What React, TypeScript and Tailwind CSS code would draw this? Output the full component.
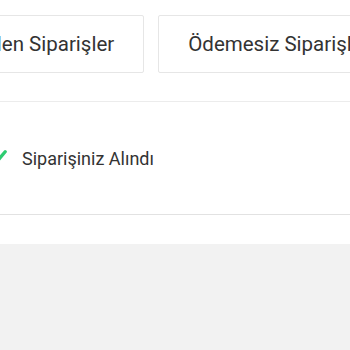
export default function App() {
  return (
    <div className="w-[350px] h-[350px] overflow-hidden bg-[#f2f2f2] font-['Roboto',sans-serif]">
      <div className="bg-white h-[244px] overflow-hidden">
        <div className="flex gap-[14px] pt-[15px] ml-[-58px] whitespace-nowrap">
          <button className="h-[58px] px-[29px] shrink-0 border border-[#e6e6e6] rounded-[2px] bg-white text-[20.5px] text-[#333]">
            Gelen Siparişler
          </button>
          <button className="h-[58px] px-[29px] shrink-0 border border-[#e6e6e6] rounded-[2px] bg-white text-[20.5px] text-[#333]">
            Ödemesiz Siparişler
          </button>
        </div>

        <div className="mt-[28px] border-t border-[#ececec]">
          <div className="h-[113px] flex items-center gap-[13px] ml-[-14px] border-b border-[#e2e2e2]">
            <svg width="23" height="23" viewBox="0 0 24 24" fill="none" stroke="#2ecc71" strokeWidth="3.5" strokeLinecap="round" strokeLinejoin="round">
              <path d="M4 13l5 5L20 5" />
            </svg>
            <span className="text-[18px] text-[#333]">Siparişiniz Alındı</span>
          </div>
        </div>
      </div>
    </div>
  );
}
